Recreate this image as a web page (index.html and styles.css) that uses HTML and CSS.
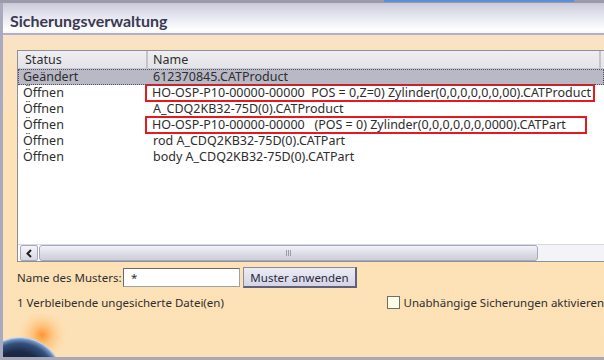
FILE: index.html
```html
<!DOCTYPE html>
<html lang="de">
<head>
<meta charset="utf-8">
<title>Sicherungsverwaltung</title>
<link rel="stylesheet" href="styles.css">
</head>
<body>
<div class="topstrip"><span class="topstrip-blue"></span></div>
<div class="window">
  <div class="titlebar">Sicherungsverwaltung</div>
  <div class="content">
    <div class="listbox">
      <div class="row header">
        <div class="cell status">Status</div>
        <div class="cell name">Name</div>
        <div class="cell rest"></div>
      </div>
      <div class="rows">
        <div class="row selected">
          <div class="cell status">Geändert</div>
          <div class="cell name">612370845.CATProduct</div>
        </div>
        <div class="row">
          <div class="cell status">Öffnen</div>
          <div class="cell name"><span class="mark mark-1">HO-OSP-P10-00000-00000&nbsp; POS = 0,Z=0) Zylinder(0,0,0,0,0,0,00).CATProduct</span></div>
        </div>
        <div class="row">
          <div class="cell status">Öffnen</div>
          <div class="cell name">A_CDQ2KB32-75D(0).CATProduct</div>
        </div>
        <div class="row">
          <div class="cell status">Öffnen</div>
          <div class="cell name"><span class="mark mark-2">HO-OSP-P10-00000-00000&nbsp;&nbsp; (POS = 0) Zylinder(0,0,0,0,0,0,0000).CATPart</span></div>
        </div>
        <div class="row">
          <div class="cell status">Öffnen</div>
          <div class="cell name">rod A_CDQ2KB32-75D(0).CATPart</div>
        </div>
        <div class="row">
          <div class="cell status">Öffnen</div>
          <div class="cell name">body A_CDQ2KB32-75D(0).CATPart</div>
        </div>
      </div>
      <div class="hscroll">
        <div class="sb-btn"><svg width="9" height="9" viewBox="0 0 9 9"><path d="M6 1 L2.5 4.5 L6 8" fill="none" stroke="#202020" stroke-width="2"/></svg></div>
        <div class="sb-thumb"><span class="grip"></span><span class="grip"></span><span class="grip"></span></div>
        <div class="sb-track"></div>
      </div>
    </div>
    <div class="pattern">
      <span class="label">Name des Musters:</span>
      <div class="input">*</div>
      <div class="button">Muster anwenden</div>
    </div>
    <div class="footer">
      <span class="remaining">1 Verbleibende ungesicherte Datei(en)</span>
      <label class="check"><span class="box"></span>Unabhängige Sicherungen aktivieren</label>
    </div>
    <div class="decor">
      <svg class="globe" width="80" height="44" viewBox="0 0 80 44">
        <defs>
          <radialGradient id="globeGlow" gradientUnits="userSpaceOnUse" cx="39" cy="22" r="27">
            <stop offset="0" stop-color="#ff8a1c" stop-opacity="0.9"/>
            <stop offset="0.35" stop-color="#ffa94a" stop-opacity="0.55"/>
            <stop offset="1" stop-color="#fde1b6" stop-opacity="0"/>
          </radialGradient>
          <radialGradient id="globeBody" gradientUnits="userSpaceOnUse" cx="17" cy="67" r="43" fx="8" fy="76">
            <stop offset="0" stop-color="#0e1526"/>
            <stop offset="0.72" stop-color="#1c2a48"/>
            <stop offset="0.88" stop-color="#34507e"/>
            <stop offset="0.95" stop-color="#6c8cba"/>
            <stop offset="1" stop-color="#b4cce6"/>
          </radialGradient>
        </defs>
        <circle cx="39" cy="22" r="27" fill="url(#globeGlow)"/>
        <circle cx="17" cy="67" r="43" fill="url(#globeBody)"/>
        <circle cx="17" cy="67" r="42.5" fill="none" stroke="#d0e2f4" stroke-opacity="0.8" stroke-width="1"/>
      </svg>
    </div>
  </div>
</div>
</body>
</html>
```
FILE: styles.css
```css
* { box-sizing: border-box; }
html, body { margin: 0; padding: 0; }
body {
  width: 604px;
  height: 360px;
  overflow: hidden;
  font-family: "Noto Sans", "DejaVu Sans", sans-serif;
  font-size: 11.5px;
  color: #2e2e2e;
  display: flex;
  flex-direction: column;
  background: #fbe3bd;
}
.topstrip {
  height: 3px;
  background: #9a9aa8;
  display: flex;
}
.topstrip-blue {
  margin-left: 384px;
  width: 190px;
  height: 2px;
  background: #5b8fd8;
}
.window {
  flex: 1;
  min-height: 0;
  display: flex;
  flex-direction: column;
  border-left: 3px solid #a9a9bf;
  border-bottom: 3px solid #a8a8b4;
  background: linear-gradient(#f4e5d0 0, #f8e3c6 20px, #fde2b8 120px, #fde1b6 100%);
}
.titlebar {
  flex: none;
  height: 32px;
  padding: 8px 0 0 7px;
  font-family: "Lato", "Noto Sans", sans-serif;
  font-size: 16px;
  font-weight: 700;
  color: #3a3a52;
  background: linear-gradient(#c9c9da 0, #dcdce8 8px, #f2f2f8 20px, #ffffff 27px, #f8f8fc 29px);
  border-bottom: 2px solid #b0b0cc;
  line-height: 20px;
}
.content {
  flex: 1;
  min-height: 0;
  padding: 15px 0 0 14px;
  display: flex;
  flex-direction: column;
}
.listbox {
  flex: none;
  height: 212px;
  background: #ffffff;
  border: 1px solid #8f8f98;
  border-right: 0;
  display: flex;
  flex-direction: column;
  font-size: 12.5px;
}
.row {
  display: flex;
  height: 16px;
  line-height: 16px;
  white-space: nowrap;
}
.cell { flex: none; }
.cell.status { width: 130px; padding-left: 5px; }
.cell.name { padding-left: 5px; }
.header {
  height: 18px;
  line-height: 18px;
  background: linear-gradient(#efeff2, #e3e3e8);
  border-bottom: 1px solid #c8c8d0;
}
.header .cell { border-right: 2px solid #c4c4cc; }
.header .cell.status { padding-left: 7px; }
.header .cell.name { width: 453px; }
.header .cell.rest { flex: 1; border-right: 0; }
.rows { flex: 1; }
.row.selected {
  background: #b9b9c6;
  outline: 1px dotted #505060;
  outline-offset: -1px;
}
.mark {
  display: inline-block;
  height: 16px;
  line-height: 16px;
  margin-left: -7px;
  padding-left: 6px;
  outline: 2px solid #e5191e;
  outline-offset: -1px;
}
.mark-1 { width: 448px; }
.mark-2 { width: 440px; }
.hscroll {
  height: 17px;
  display: flex;
  border-top: 1px solid #d8d8e0;
}
.sb-btn {
  width: 18px;
  margin-left: 2px;
  display: flex;
  align-items: center;
  justify-content: center;
  background: linear-gradient(#f4f4f8, #d8d8e4);
  border: 1px solid #a8a8b8;
  border-radius: 2px;
}
.sb-thumb {
  width: 499px;
  margin-left: 1px;
  background: linear-gradient(#f2f2f8, #dadae6 60%, #cfcfdc);
  border: 1px solid #a8a8bc;
  border-radius: 3px;
  display: flex;
  align-items: center;
  justify-content: center;
  gap: 1px;
}
.grip { width: 1px; height: 6px; background: #9a9aaa; }
.sb-track { flex: 1; background: #f4f4f8; }
.pattern {
  flex: none;
  display: flex;
  align-items: center;
  margin-top: 4px;
  height: 22px;
}
.label { width: 106px; }
.input {
  width: 117px;
  height: 19px;
  background: #fff;
  border: 1px solid #a0a0a8;
  border-top-color: #6a6a72;
  border-left-color: #6a6a72;
  padding-left: 7px;
  line-height: 17px;
}
.button {
  margin-left: 3px;
  width: 114px;
  height: 21px;
  line-height: 19px;
  text-align: center;
  background: linear-gradient(#ececf6, #d4d4e6);
  border: 1px solid #8a8aa4;
  border-right: 2px solid #60607a;
  border-bottom: 2px solid #60607a;
  color: #2a2a3a;
}
.footer {
  flex: none;
  display: flex;
  align-items: center;
  margin-top: 5px;
  height: 18px;
  white-space: nowrap;
}
.remaining { width: 372px; }
.check { display: flex; align-items: center; }
.box {
  width: 13px;
  height: 13px;
  border: 1px solid #6e6e6e;
  background: #fdfde6;
  margin-right: 4px;
}
.decor {
  flex: 1;
  min-height: 0;
  margin-left: -14px;
  display: flex;
  align-items: flex-end;
  overflow: hidden;
}
.globe { display: block; flex: none; }
```
